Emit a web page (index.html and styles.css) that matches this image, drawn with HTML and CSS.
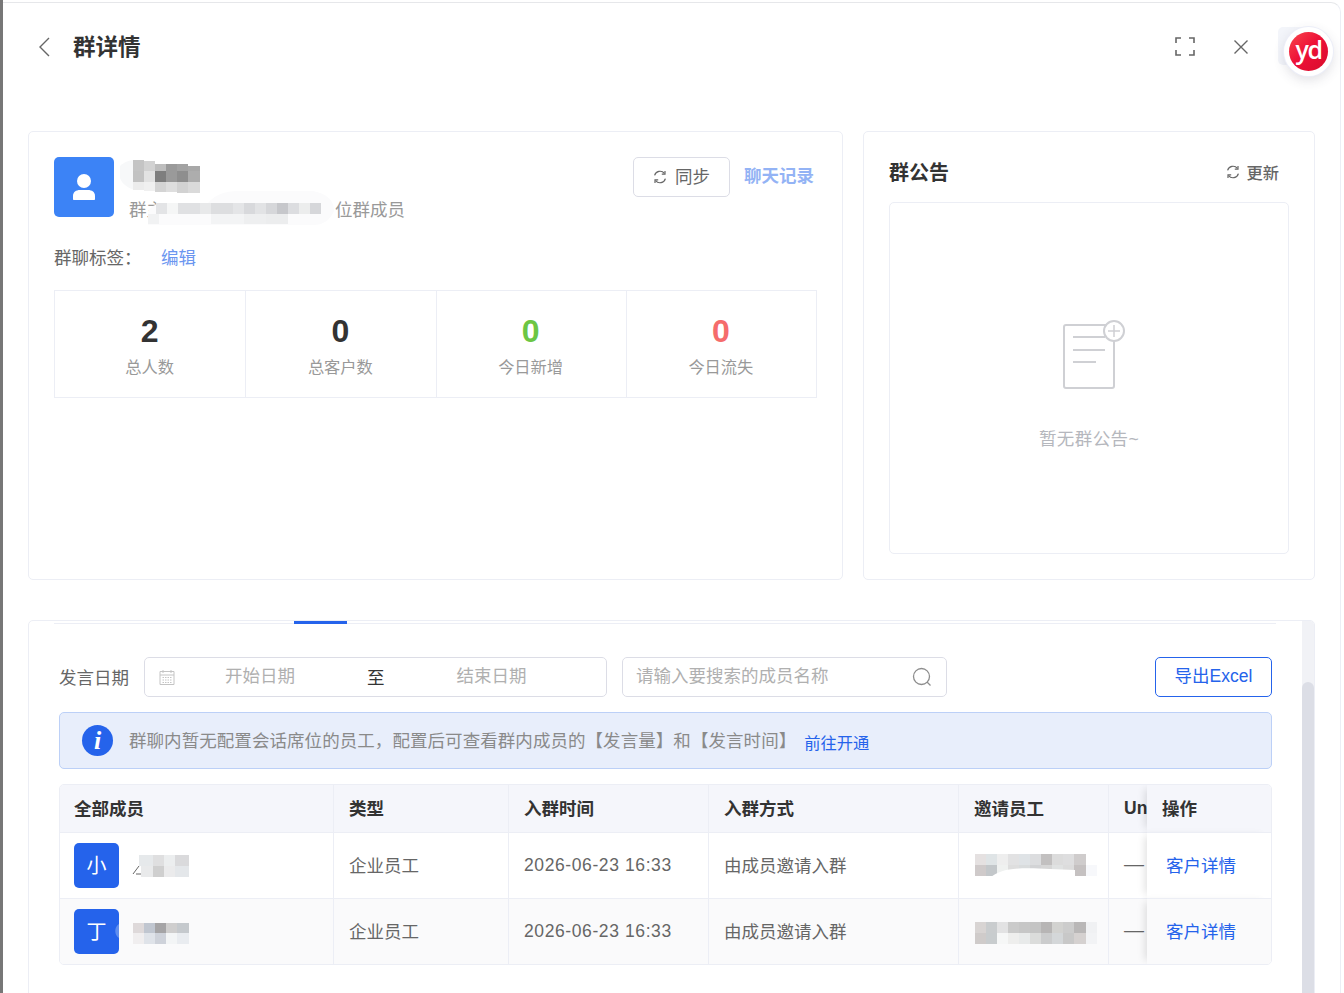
FILE: index.html
```html
<!DOCTYPE html>
<html lang="zh-CN">
<head>
    <meta charset="UTF-8">
    <meta name="viewport" content="width=device-width, initial-scale=1.0">
    <title>群详情</title>
    <link rel="stylesheet" href="styles.css">
</head>
<body>
    <div class="edge"></div>

    <div class="drawer">
        <header class="top">
            <svg class="back" width="12" height="20" viewBox="0 0 12 20"><path d="M11 1 2 10l9 9" fill="none" stroke="#666" stroke-width="1.4"/></svg>
            <h1>群详情</h1>
            <svg class="expand" width="20" height="19" viewBox="0 0 20 19"><path d="M1 6V1h5M14 1h5v5M19 13v5h-5M6 18H1v-5" fill="none" stroke="#666" stroke-width="1.6"/></svg>
            <svg class="close" width="16" height="16" viewBox="0 0 16 16"><path d="M1.5 1.5l13 13M14.5 1.5l-13 13" fill="none" stroke="#666" stroke-width="1.4"/></svg>
        </header>

        <div class="logo-back"></div>
        <div class="logo">
            <div class="logo-inner">yd</div>
        </div>

        <section class="upper">
            <div class="card info">
                <div class="info-head">
                    <div class="avatar">
                        <svg width="34" height="30" viewBox="0 0 34 30"><circle cx="17" cy="9" r="7" fill="#fff"/><path d="M6 27v-3c0-4 3-6 7-6h8c4 0 7 2 7 6v3c0 .6-.4 1-1 1H7c-.6 0-1-.4-1-1z" fill="#fff"/></svg>
                    </div>
                    <div class="group-text">
                        <svg class="name-mosaic" width="82" height="34" viewBox="0 0 82 34">
                            <path d="M0 6C4 2 10 0 15 0v30C8 28 2 24 0 18z" fill="#f7f8f9"/>
                            <g shape-rendering="crispEdges">
                                <rect x="13" y="0" width="11" height="11" fill="#c4c4c4"/><rect x="24" y="1" width="11" height="10" fill="#d2d2d2"/><rect x="35" y="4" width="11" height="7" fill="#bdbdbd"/><rect x="46" y="4" width="11" height="7" fill="#9a9a9a"/><rect x="57" y="4" width="11" height="7" fill="#a2a2a2"/><rect x="68" y="6" width="12" height="5" fill="#a8a8a8"/>
                                <rect x="13" y="11" width="11" height="11" fill="#c2c2c2"/><rect x="24" y="11" width="11" height="11" fill="#e2e2e2"/><rect x="35" y="11" width="11" height="11" fill="#7e7e7e"/><rect x="46" y="11" width="11" height="11" fill="#9a9a9a"/><rect x="57" y="11" width="11" height="11" fill="#8e8e8e"/><rect x="68" y="11" width="12" height="11" fill="#adadad"/>
                                <rect x="13" y="22" width="11" height="8" fill="#ececec"/><rect x="24" y="22" width="11" height="9" fill="#f0f0f0"/><rect x="35" y="22" width="11" height="10" fill="#d4d4d4"/><rect x="46" y="22" width="11" height="10" fill="#dedede"/><rect x="57" y="22" width="11" height="11" fill="#d2d2d2"/><rect x="68" y="22" width="12" height="11" fill="#dadada"/>
                            </g>
                        </svg>
                        <div class="group-sub">
                            <span class="owner">群主</span>
                            <svg class="sub-mosaic" width="186" height="34" viewBox="0 0 186 34">
                                <path d="M0 34V24Q0 12 20 12H60Q70 0 90 0H165Q186 4 186 20Q180 34 165 34Z" fill="#fbfbfc"/>
                                <g shape-rendering="crispEdges">
                                    <rect x="8" y="12" width="11" height="11" fill="#e3e4e6"/><rect x="19" y="12" width="11" height="11" fill="#f5f6f6"/><rect x="30" y="12" width="22" height="11" fill="#e0e1e3"/><rect x="52" y="12" width="11" height="11" fill="#e8e9ea"/><rect x="63" y="12" width="22" height="11" fill="#dddee0"/><rect x="85" y="12" width="11" height="11" fill="#e4e5e7"/><rect x="96" y="12" width="11" height="11" fill="#d8d9dc"/><rect x="107" y="12" width="11" height="11" fill="#e2e3e5"/><rect x="118" y="12" width="11" height="11" fill="#d6d7da"/><rect x="129" y="12" width="11" height="11" fill="#c6c7cb"/><rect x="140" y="12" width="11" height="11" fill="#dcdde0"/><rect x="151" y="12" width="11" height="11" fill="#eceded"/><rect x="162" y="12" width="11" height="11" fill="#d6d7da"/>
                                    <rect x="0" y="23" width="11" height="10" fill="#f1f2f3"/><rect x="63" y="23" width="33" height="10" fill="#f3f4f5"/><rect x="96" y="23" width="22" height="10" fill="#eeeff0"/><rect x="118" y="23" width="22" height="10" fill="#ecedee"/>
                                </g>
                            </svg>
                            <span>位群成员</span>
                        </div>
                    </div>
                    <div class="info-actions">
                        <button class="sync-btn">
                            <svg class="sync" width="14" height="14" viewBox="0 0 14 14"><path d="M1.6 5.4A5.6 5.6 0 0 1 11.4 3.4M12.4 8.6A5.6 5.6 0 0 1 2.6 10.6" fill="none" stroke="#666" stroke-width="1.2"/><path d="M12 1v3.2H8.8M2 13V9.8h3.2" fill="none" stroke="#666" stroke-width="1.2"/></svg>
                            <span class="sync-text">同步</span>
                        </button>
                        <a class="chat-link" href="#">聊天记录</a>
                    </div>
                </div>

                <div class="tag-row">
                    <span class="tag-label">群聊标签：</span>
                    <a class="tag-edit" href="#">编辑</a>
                </div>

                <div class="stats">
                    <div class="stat"><strong>2</strong><span>总人数</span></div>
                    <div class="stat"><strong>0</strong><span>总客户数</span></div>
                    <div class="stat"><strong class="green">0</strong><span>今日新增</span></div>
                    <div class="stat"><strong class="red">0</strong><span>今日流失</span></div>
                </div>
            </div>

            <div class="card notice">
                <div class="notice-head">
                    <h2>群公告</h2>
                    <span class="refresh">
                        <svg class="sync" width="14" height="14" viewBox="0 0 14 14"><path d="M1.6 5.4A5.6 5.6 0 0 1 11.4 3.4M12.4 8.6A5.6 5.6 0 0 1 2.6 10.6" fill="none" stroke="#666" stroke-width="1.2"/><path d="M12 1v3.2H8.8M2 13V9.8h3.2" fill="none" stroke="#666" stroke-width="1.2"/></svg>
                        更新
                    </span>
                </div>
                <div class="notice-body">
                    <svg class="notice-icon" width="64" height="70" viewBox="0 0 64 70">
                        <rect x="2" y="5" width="50" height="63" rx="2" fill="#fff" stroke="#cfd0d4" stroke-width="2"/>
                        <path d="M11 17h32M11 30h32M11 42h23" stroke="#cfd0d4" stroke-width="2"/>
                        <circle cx="52" cy="11" r="10" fill="#fff" stroke="#cfd0d4" stroke-width="2"/>
                        <path d="M52 5v12M46 11h12" stroke="#cfd0d4" stroke-width="1.5"/>
                    </svg>
                    <p>暂无群公告~</p>
                </div>
            </div>
        </section>

        <section class="card members">
            <div class="scroll-track"><div class="scroll-thumb"></div></div>
            <div class="tabs"><span class="tab-active"></span></div>

            <div class="filters">
                <label class="filter-label">发言日期</label>
                <div class="date-box">
                    <svg class="calendar" width="16" height="16" viewBox="0 0 16 16"><path d="M1 2.5h14v13H1zM1 6h14" fill="none" stroke="#c4c4c4" stroke-width="1"/><path d="M4 1v3M12 1v3" stroke="#c4c4c4"/><path d="M3.5 8.5h9M3.5 11h9M3.5 13.500h9" stroke="#c4c4c4" stroke-dasharray="1.500 1"/></svg>
                    <span class="date-start">开始日期</span>
                    <span class="date-to">至</span>
                    <span class="date-end">结束日期</span>
                </div>
                <div class="search-box">
                    <span class="search-text">请输入要搜索的成员名称</span>
                    <svg width="20" height="20" viewBox="0 0 20 20"><circle cx="9.500" cy="9.500" r="8" fill="none" stroke="#8e8e8e" stroke-width="1.300"/><path d="M15 15l3.500 3.500" stroke="#8e8e8e" stroke-width="1.300"/></svg>
                </div>
                <button class="export-btn">导出Excel</button>
            </div>

            <div class="alert">
                <span class="alert-icon">i</span>
                <span class="alert-text">群聊内暂无配置会话席位的员工，配置后可查看群内成员的【发言量】和【发言时间】</span>
                <a class="alert-link" href="#">前往开通</a>
            </div>

            <div class="table-wrap">
                <table class="member-table">
                    <colgroup>
                        <col class="col-name"><col class="col-type"><col class="col-time"><col class="col-way"><col class="col-staff"><col class="col-un"><col class="col-op">
                    </colgroup>
                    <thead>
                        <tr>
                            <th>全部成员</th>
                            <th>类型</th>
                            <th>入群时间</th>
                            <th>入群方式</th>
                            <th>邀请员工</th>
                            <th class="un">Un</th>
                            <th class="op">操作</th>
                        </tr>
                    </thead>
                    <tbody>
                        <tr>
                            <td>
                                <div class="member">
                                    <span class="member-avatar">小</span>
                                    <svg class="cell-mosaic" width="80" height="46" viewBox="0 0 80 46">
                                        <g transform="translate(0,10)">
                                            <path d="M0 21 6 13M3 21h6" stroke="#666" stroke-width="1" fill="none"/>
                                            <g shape-rendering="crispEdges">
                                                <rect x="6" y="2" width="14" height="11" fill="#e6e9eb"/><rect x="20" y="2" width="11" height="11" fill="#dfdfe0"/><rect x="31" y="2" width="11" height="11" fill="#eceeef"/><rect x="42" y="2" width="14" height="11" fill="#dadadc"/>
                                                <rect x="8" y="13" width="12" height="11" fill="#e9eaeb"/><rect x="20" y="13" width="11" height="11" fill="#cfcfcf"/><rect x="31" y="13" width="11" height="11" fill="#ebebec"/><rect x="42" y="13" width="14" height="11" fill="#e4e7ea"/>
                                            </g>
                                        </g>
                                    </svg>
                                </div>
                            </td>
                            <td>企业员工</td>
                            <td class="time">2026-06-23 16:33</td>
                            <td>由成员邀请入群</td>
                            <td>
                                <svg class="cell-mosaic staff" width="124" height="24" viewBox="0 0 124 24">
                                    <g shape-rendering="crispEdges">
                                        <rect x="0" y="0" width="11" height="11" fill="#e5e1e1"/><rect x="11" y="0" width="11" height="11" fill="#dfe4e6"/><rect x="22" y="0" width="11" height="11" fill="#eeeeee"/><rect x="33" y="0" width="11" height="11" fill="#e2e2e3"/><rect x="44" y="0" width="11" height="11" fill="#dfe3e6"/><rect x="55" y="0" width="11" height="11" fill="#dcdddf"/><rect x="66" y="0" width="11" height="11" fill="#c2c0c0"/><rect x="77" y="0" width="11" height="11" fill="#dcdcdc"/><rect x="88" y="0" width="11" height="11" fill="#dededf"/><rect x="99" y="0" width="12" height="11" fill="#cfcccc"/>
                                        <rect x="0" y="11" width="11" height="11" fill="#cfcaca"/><rect x="11" y="11" width="11" height="11" fill="#c3c7ca"/><rect x="22" y="11" width="11" height="11" fill="#eff1f0"/><rect x="33" y="11" width="11" height="11" fill="#dedede"/><rect x="44" y="11" width="11" height="11" fill="#d9dcdd"/><rect x="55" y="11" width="11" height="11" fill="#d2d3d5"/><rect x="66" y="11" width="11" height="11" fill="#d6d6d6"/><rect x="77" y="11" width="11" height="11" fill="#e0e2e2"/><rect x="88" y="11" width="11" height="11" fill="#dcdcdc"/><rect x="99" y="11" width="12" height="11" fill="#c5c1c1"/><rect x="111" y="11" width="11" height="11" fill="#f7f8fb"/>
                                    </g>
                                    <path d="M15 24c10-10 30-11 60-9l25 1v8z" fill="#fff"/>
                                </svg>
                            </td>
                            <td class="dash">—</td>
                            <td class="op"><a href="#">客户详情</a></td>
                        </tr>
                        <tr class="alt">
                            <td>
                                <div class="member">
                                    <span class="member-avatar">丁</span>
                                    <svg class="cell-mosaic" width="80" height="46" viewBox="0 0 80 46">
                                        <path d="M-14 15C-19 18-19 26-14 29z" fill="#5f8eef"/>
                                        <g transform="translate(0,5)" shape-rendering="crispEdges">
                                            <rect x="0" y="9" width="11" height="10" fill="#ded9da"/><rect x="11" y="9" width="11" height="10" fill="#c0c6d0"/><rect x="22" y="9" width="11" height="10" fill="#a5a4a6"/><rect x="33" y="9" width="11" height="10" fill="#cfcece"/><rect x="44" y="9" width="12" height="10" fill="#c5c9cd"/>
                                            <rect x="0" y="19" width="11" height="11" fill="#f0eeef"/><rect x="11" y="19" width="11" height="11" fill="#dfe3e9"/><rect x="22" y="19" width="11" height="11" fill="#ced2da"/><rect x="33" y="19" width="11" height="11" fill="#f3f5f6"/><rect x="44" y="19" width="12" height="11" fill="#e9ecf0"/>
                                        </g>
                                    </svg>
                                </div>
                            </td>
                            <td>企业员工</td>
                            <td class="time">2026-06-23 16:33</td>
                            <td>由成员邀请入群</td>
                            <td>
                                <svg class="cell-mosaic staff-low" width="124" height="24" viewBox="0 0 124 24">
                                    <g shape-rendering="crispEdges">
                                        <rect x="0" y="0" width="11" height="11" fill="#d8d4d3"/><rect x="11" y="0" width="11" height="11" fill="#c9ccce"/><rect x="22" y="0" width="11" height="11" fill="#e2e2e3"/><rect x="33" y="0" width="11" height="11" fill="#cacaca"/><rect x="44" y="0" width="11" height="11" fill="#c6c6c6"/><rect x="55" y="0" width="11" height="11" fill="#c4c4c4"/><rect x="66" y="0" width="11" height="11" fill="#b7b5b5"/><rect x="77" y="0" width="11" height="11" fill="#d2d2d0"/><rect x="88" y="0" width="11" height="11" fill="#cccccc"/><rect x="99" y="0" width="12" height="11" fill="#b9b7b7"/><rect x="111" y="0" width="11" height="11" fill="#f0f1f3"/>
                                        <rect x="0" y="11" width="11" height="11" fill="#cfcbca"/><rect x="11" y="11" width="11" height="11" fill="#c8ccce"/><rect x="22" y="11" width="11" height="11" fill="#f6f7f7"/><rect x="33" y="11" width="11" height="11" fill="#eeeeed"/><rect x="44" y="11" width="11" height="11" fill="#e8eaea"/><rect x="55" y="11" width="11" height="11" fill="#dbdcdb"/><rect x="66" y="11" width="11" height="11" fill="#cbcccd"/><rect x="77" y="11" width="11" height="11" fill="#d4d7d9"/><rect x="88" y="11" width="11" height="11" fill="#c8c8c8"/><rect x="99" y="11" width="12" height="11" fill="#d5d1d0"/><rect x="111" y="11" width="11" height="11" fill="#f2f3f5"/>
                                    </g>
                                </svg>
                            </td>
                            <td class="dash">—</td>
                            <td class="op"><a href="#">客户详情</a></td>
                        </tr>
                    </tbody>
                </table>
            </div>
        </section>
    </div>
</body>
</html>
```

FILE: styles.css
```css
/* Reset and base styles */
* {
    margin: 0;
    padding: 0;
    box-sizing: border-box;
}

html, body {
    height: 993px;
    overflow: hidden;
}

body {
    display: flex;
    font-family: "Liberation Sans", "Noto Sans CJK SC", sans-serif;
    font-size: 17.5px;
    color: #333;
    background-color: #fff;
}

a {
    text-decoration: none;
}

button {
    font-family: inherit;
    background: #fff;
    cursor: pointer;
}

.edge {
    width: 3px;
    height: 993px;
    flex: none;
    background-color: #777;
}

.drawer {
    position: relative;
    width: 1338px;
    height: 991px;
    margin-top: 2px;
    padding: 0 25px;
    flex: none;
    background-color: #fff;
    border-top: 1px solid #e6e7ea;
    border-right: 1px solid #eceef5;
    border-top-right-radius: 10px;
}

/* Header */
.top {
    display: flex;
    align-items: center;
    height: 87px;
    margin-bottom: 41px;
}

.back {
    margin-left: 10px;
}

.top h1 {
    margin-left: 23px;
    margin-bottom: 3px;
    font-size: 22.500px;
    font-weight: 700;
    color: #333;
}

.expand {
    margin-left: auto;
}

.close {
    margin-left: 38px;
    margin-right: 66px;
}

.logo-back {
    position: absolute;
    top: 24px;
    left: 1275px;
    width: 40px;
    height: 38px;
    border-radius: 5px;
    background-color: #f3f5fa;
}

.logo {
    position: absolute;
    top: 24px;
    left: 1281px;
    width: 49px;
    height: 49px;
    padding: 5px;
    border-radius: 50%;
    background-color: #fff;
    box-shadow: 0 0 0 1px #eceef8, 0 4px 12px rgba(60, 60, 90, 0.16);
}

.logo-inner {
    width: 39px;
    height: 39px;
    border-radius: 50%;
    background: linear-gradient(135deg, #f8484c 0%, #ee1238 45%, #d80c2c 100%);
    color: #fff;
    font-family: "Open Sans", sans-serif;
    font-size: 25px;
    font-weight: 600;
    line-height: 35px;
    letter-spacing: -1.500px;
    text-align: center;
}

/* Top cards */
.upper {
    display: grid;
    grid-template-columns: 815px 452px;
    gap: 20px;
}

.card {
    background-color: #fff;
    border: 1px solid #eceef5;
    border-radius: 5px;
}

.info {
    height: 449px;
    padding: 25px;
}

.info-head {
    display: flex;
    height: 60px;
}

.avatar {
    display: flex;
    align-items: center;
    justify-content: center;
    width: 60px;
    height: 60px;
    border-radius: 5px;
    background-color: #3c83f6;
}

.group-text {
    width: 290px;
    margin-left: 6px;
}

.name-mosaic {
    display: block;
    margin-top: 3px;
}

.group-sub {
    display: flex;
    align-items: center;
    height: 34px;
    margin-left: 9px;
    margin-top: -3px;
    color: #999;
    white-space: nowrap;
}

.owner {
    width: 35px;
    flex: none;
}

.sub-mosaic {
    flex: none;
    margin-left: -16px;
    margin-right: 1px;
}

.info-actions {
    display: flex;
    align-items: flex-start;
    margin-left: auto;
}

.sync-btn {
    display: flex;
    align-items: center;
    justify-content: center;
    gap: 8px;
    width: 97px;
    height: 40px;
    border: 1px solid #dcdde6;
    border-radius: 5px;
    color: #666;
    font-size: 17.500px;
}

.sync-text {
    margin-bottom: 4px;
}

.chat-link {
    margin-left: 14px;
    margin-right: 3px;
    line-height: 38px;
    font-weight: 700;
    color: #93b3f5;
}

.tag-row {
    display: flex;
    align-items: center;
    height: 30px;
    margin-top: 24px;
    color: #666;
}

.tag-label {
    width: 107px;
}

.tag-edit {
    color: #6b96f0;
}

.stats {
    display: grid;
    grid-template-columns: repeat(4, 1fr);
    height: 108px;
    margin-top: 19px;
    border: 1px solid #eceef5;
}

.stat {
    display: flex;
    flex-direction: column;
    align-items: center;
    padding-top: 20px;
    padding-right: 1px;
    border-left: 1px solid #eceef5;
}

.stat:first-child {
    border-left: none;
}

.stat strong {
    font-size: 32px;
    line-height: 40px;
    font-weight: 700;
    color: #333;
}

.stat strong.green {
    color: #6cc644;
}

.stat strong.red {
    color: #f56c6c;
}

.stat span {
    margin-top: 3px;
    font-size: 16.250px;
    color: #999;
}

.notice {
    height: 449px;
    padding: 0 25px;
}

.notice-head {
    display: flex;
    align-items: center;
    justify-content: space-between;
    height: 70px;
    padding-top: 9px;
    padding-right: 10px;
}

.notice-head h2 {
    font-size: 20px;
    font-weight: 700;
    color: #333;
}

.refresh {
    display: flex;
    align-items: center;
    gap: 7px;
    font-size: 16.250px;
    font-weight: 500;
    color: #666;
}

.notice-body {
    display: flex;
    flex-direction: column;
    align-items: center;
    height: 352px;
    padding-top: 117px;
    border: 1px solid #eceef5;
    border-radius: 5px;
}

.notice-icon {
    margin-left: 10px;
}

.notice-body p {
    margin-top: 35px;
    letter-spacing: 0.400px;
    color: #b5b7bd;
}

/* Members */
.members {
    position: relative;
    height: 400px;
    margin-top: 40px;
    padding: 2px 42px 0 30px;
    overflow: hidden;
}

.scroll-track {
    position: absolute;
    top: 0;
    right: 0;
    width: 12px;
    height: 100%;
    background-color: #f1f2f6;
}

.scroll-thumb {
    position: absolute;
    top: 61px;
    left: 0;
    width: 12px;
    height: 339px;
    border-radius: 6px 6px 0 0;
    background-color: #dcdee6;
}

.tabs {
    position: relative;
    width: 1222px;
    height: 1px;
    margin-left: -5px;
    background-color: #eceef5;
}

.tab-active {
    position: absolute;
    top: -2px;
    left: 240px;
    width: 53px;
    height: 3px;
    background-color: #2563eb;
}

.filters {
    display: flex;
    align-items: center;
    height: 40px;
    margin-top: 33px;
}

.filter-label {
    width: 85px;
    padding-bottom: 2px;
    color: #666;
}

.date-box {
    display: flex;
    align-items: center;
    width: 463px;
    height: 40px;
    padding-left: 14px;
    border: 1px solid #dcdde6;
    border-radius: 5px;
    color: #b0b0b0;
}

.date-start {
    margin-left: 50px;
    padding-bottom: 5px;
}

.date-to {
    margin-left: 72px;
    padding-bottom: 1px;
    color: #333;
}

.date-end {
    margin-left: 72px;
    padding-bottom: 5px;
}

.search-box {
    display: flex;
    align-items: center;
    justify-content: space-between;
    width: 325px;
    height: 40px;
    margin-left: 15px;
    padding: 0 14px 0 13px;
    border: 1px solid #dcdde6;
    border-radius: 5px;
    color: #b0b0b0;
}

.search-text {
    padding-bottom: 5px;
}

.export-btn {
    width: 117px;
    height: 40px;
    margin-left: auto;
    padding-bottom: 5px;
    border: 1px solid #2563eb;
    border-radius: 5px;
    color: #2563eb;
    font-size: 17.500px;
}

.alert {
    display: flex;
    align-items: center;
    height: 57px;
    margin-top: 15px;
    padding-left: 22px;
    border: 1px solid #bcd0f7;
    border-radius: 5px;
    background-color: #e8eefb;
    color: #8a8a8a;
}

.alert-icon {
    width: 31px;
    height: 31px;
    flex: none;
    border-radius: 50%;
    background-color: #2563eb;
    color: #fff;
    font-family: "Liberation Serif", serif;
    font-size: 26px;
    font-style: italic;
    font-weight: 700;
    line-height: 31px;
    text-align: center;
}

.alert-text {
    margin-left: 16px;
    padding-bottom: 2px;
    letter-spacing: 0.060px;
    white-space: nowrap;
}

.alert-link {
    margin-left: 8px;
    padding-top: 3px;
    font-size: 16.250px;
    color: #2563eb;
}

.table-wrap {
    position: relative;
    width: 1213px;
    margin-top: 15px;
    border: 1px solid #eceef5;
    border-radius: 5px;
    overflow: hidden;
}

.member-table {
    width: 1211px;
    table-layout: fixed;
    border-collapse: separate;
    border-spacing: 0;
}

.col-name { width: 273px; }
.col-type { width: 175px; }
.col-time { width: 200px; }
.col-way { width: 250px; }
.col-staff { width: 150px; }
.col-un { width: 39px; }
.col-op { width: 124px; }

.member-table th,
.member-table td {
    padding-left: 15px;
    padding-bottom: 2px;
    border-left: 1px solid #eceef5;
    text-align: left;
    white-space: nowrap;
    overflow: hidden;
}

.member-table th:first-child,
.member-table td:first-child {
    padding-left: 14px;
    border-left: none;
    overflow: visible;
}

.member-table td:first-child {
    padding-bottom: 0;
}

.member-table th {
    height: 47px;
    background-color: #f5f6fb;
    font-weight: 700;
    color: #333;
}

.member-table th.un {
    padding-bottom: 0;
}

.member-table td {
    height: 66px;
    border-top: 1px solid #eceef5;
    background-color: #fff;
    color: #666;
}

.member-table tr.alt td {
    background-color: #fafafb;
}

.member-table td.dash {
    font-size: 20px;
}

.member-table td.time {
    padding-bottom: 0;
    letter-spacing: 0.600px;
    font-size: 17.500px;
}

.member-table .op {
    position: relative;
    border-left: none;
    box-shadow: -6px 0 8px -4px rgba(0, 0, 0, 0.12);
}

.member-table td.op {
    padding-left: 19px;
}

.op a {
    color: #2563eb;
    font-size: 17.500px;
}

.member {
    display: flex;
    align-items: center;
}

.member-avatar {
    display: flex;
    align-items: center;
    justify-content: center;
    width: 45px;
    height: 45px;
    padding-bottom: 3px;
    flex: none;
    border-radius: 5px;
    background-color: #2563eb;
    color: #fff;
    font-size: 20px;
}

.cell-mosaic {
    display: block;
    overflow: visible;
}

.member .cell-mosaic {
    margin-left: 14px;
}

.staff {
    margin-top: 2px;
    margin-left: 1px;
}

.staff-low {
    margin-top: 6px;
    margin-left: 1px;
}
```
